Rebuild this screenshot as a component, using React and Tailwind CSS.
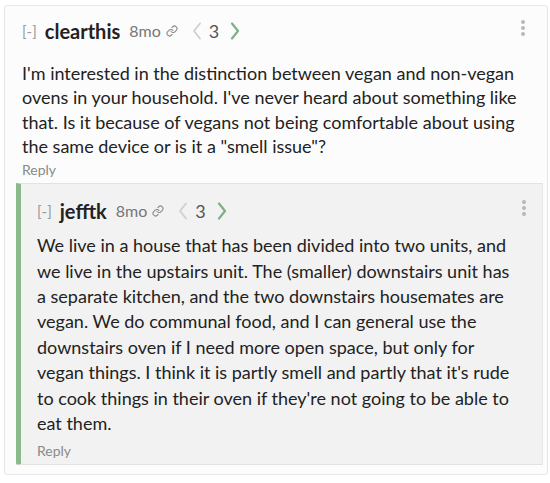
import React from 'react';

const font = { fontFamily: 'Lato, "Open Sans", sans-serif' };

const LinkIcon = () => (
  <svg width="12" height="12" viewBox="0 0 24 24" fill="none" stroke="#8a8a8a" strokeWidth="2.2" strokeLinecap="round" strokeLinejoin="round">
    <path d="M10 13a5 5 0 0 0 7.54.54l3-3a5 5 0 0 0-7.07-7.07l-1.72 1.71" />
    <path d="M14 11a5 5 0 0 0-7.54-.54l-3 3a5 5 0 0 0 7.07 7.07l1.71-1.71" />
  </svg>
);

const Dots = () => (
  <div className="flex flex-col gap-[2px] -mt-[6px]">
    <span className="block w-[4px] h-[4px] rounded-full bg-[#b8b8b8]" />
    <span className="block w-[4px] h-[4px] rounded-full bg-[#b8b8b8]" />
    <span className="block w-[4px] h-[4px] rounded-full bg-[#b8b8b8]" />
  </div>
);

const Header = ({ author }) => (
  <div className="flex items-center justify-between h-[26px]">
    <div className="flex items-center">
      <span className="text-[15px] text-[#9a9a9a] mr-[8px]">[-]</span>
      <span className="text-[20px] font-bold text-[#222] mr-[9px]">{author}</span>
      <span className="text-[16px] text-[#767676] mr-[5px]">8mo</span>
      <LinkIcon />
      <svg width="10" height="18" viewBox="0 0 10 18" className="ml-[14px] mr-[7px]" fill="none" stroke="#cfcfcf" strokeWidth="1.8" strokeLinecap="round" strokeLinejoin="round">
        <path d="M8 1.5 L2 9 L8 16.5" />
      </svg>
      <span className="text-[18px] text-[#555] mr-[11px]">3</span>
      <svg width="10" height="18" viewBox="0 0 10 18" fill="none" stroke="#7fb084" strokeWidth="2.2" strokeLinecap="round" strokeLinejoin="round">
        <path d="M2 1.5 L8 9 L2 16.5" />
      </svg>
    </div>
    <Dots />
  </div>
);

const Lines = ({ lines, className }) => (
  <div className={className}>
    {lines.map((l, i) => (
      <div key={i} className="whitespace-nowrap">{l}</div>
    ))}
  </div>
);

const outerText = [
  "I'm interested in the distinction between vegan and non-vegan",
  "ovens in your household. I've never heard about something like",
  "that. Is it because of vegans not being comfortable about using",
  'the same device or is it a "smell issue"?',
];

const innerText = [
  'We live in a house that has been divided into two units, and',
  'we live in the upstairs unit. The (smaller) downstairs unit has',
  'a separate kitchen, and the two downstairs housemates are',
  'vegan. We do communal food, and I can general use the',
  'downstairs oven if I need more open space, but only for',
  "vegan things. I think it is partly smell and partly that it's rude",
  "to cook things in their oven if they're not going to be able to",
  'eat them.',
];

export default function App() {
  return (
    <div className="pt-[5px] pl-[4px] w-[548px]" style={font}>
      <div className="border border-[#e6e6ec] rounded-[3px] bg-[#fcfcfc] pb-[9px]">
        <div className="pl-[17px] pr-[22px] pt-[12px] pb-[3px]">
          <Header author="clearthis" />
          <Lines lines={outerText} className="text-[18px] leading-[24.3px] text-[#222] mt-[17px]" />
          <div className="text-[14px] leading-[20px] text-[#8a8a8a] mt-[2px]">Reply</div>
        </div>
        <div className="ml-[11px] mr-[4px] bg-[#f2f2f2] border-t border-[#e2e2e2] border-b border-l-[5px] border-l-[#8ab98c] border-r border-r-[#e8e8e8] rounded-bl-[2px]">
          <div className="pl-[16px] pr-[16px] pt-[14px] pb-[3px]">
            <Header author="jefftk" />
            <Lines lines={innerText} className="text-[18px] leading-[25.4px] text-[#222] mt-[9px]" />
            <div className="text-[14px] leading-[20px] text-[#8a8a8a] mt-[5px]">Reply</div>
          </div>
        </div>
      </div>
    </div>
  );
}
